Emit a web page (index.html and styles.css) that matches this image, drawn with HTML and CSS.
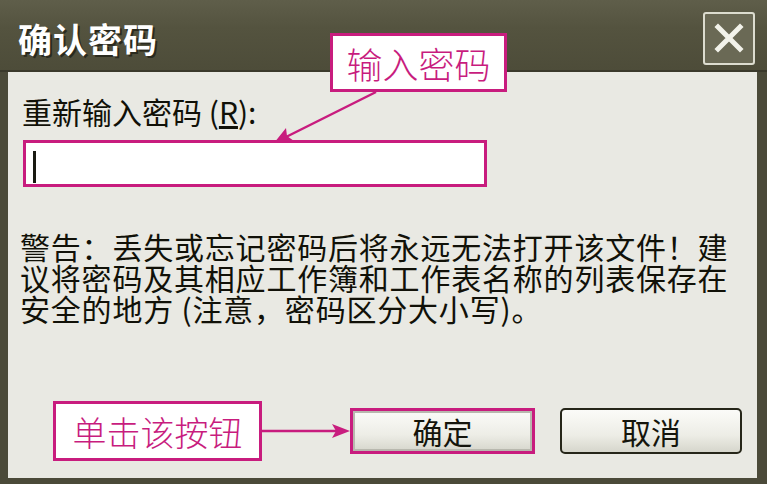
FILE: index.html
```html
<!DOCTYPE html>
<html lang="zh-CN">
<head>
<meta charset="utf-8">
<title>确认密码</title>
<link rel="stylesheet" href="styles.css">
</head>
<body>
<div class="window">
  <div class="titlebar">
    <span class="title">确认密码</span>
    <span class="close">
      <svg width="30" height="30" viewBox="0 0 30 30"><path d="M4 4 L26 26 M26 4 L4 26" stroke="#f2f2ea" stroke-width="5" stroke-linecap="square"/></svg>
    </span>
  </div>
  <div class="content">
    <div class="label">重新输入密码 (<u>R</u>):</div>
    <div class="input"><span class="caret"></span></div>
    <p class="warning">警告：丢失或忘记密码后将永远无法打开该文件！建<br>议将密码及其相应工作簿和工作表名称的列表保存在<br>安全的地方 (注意，密码区分大小写)。</p>
    <div class="buttons">
      <div class="callout callout-click">单击该按钮</div>
      <svg class="arrow-h" width="88" height="20" viewBox="0 0 88 20">
        <line x1="0" y1="10" x2="76" y2="10" stroke="#c81c7e" stroke-width="2.5"/>
        <path d="M88 10 L70 3 L74 10 L70 17 Z" fill="#c81c7e"/>
      </svg>
      <div class="btn btn-ok">确定</div>
      <div class="btn btn-cancel">取消</div>
    </div>
  </div>
  <div class="callout callout-input">输入密码</div>
  <svg class="arrow-d" width="110" height="56" viewBox="0 0 110 56">
    <line x1="104" y1="2" x2="14" y2="47" stroke="#c81c7e" stroke-width="2.5"/>
    <path d="M2 53 L14 38 L15 46 L22 51 Z" fill="#c81c7e"/>
  </svg>
</div>
</body>
</html>
```
FILE: styles.css
```css
html, body {
  margin: 0;
  padding: 0;
  background: #4a4938;
}
.window {
  position: relative;
  width: 767px;
  height: 484px;
  background: #4b4a39;
  display: flex;
  flex-direction: column;
  font-family: "Noto Sans CJK SC", "Noto Sans", sans-serif;
  overflow: hidden;
}
.titlebar {
  height: 72px;
  box-sizing: border-box;
  padding: 6px 12px 0 18px;
  display: flex;
  align-items: center;
  justify-content: space-between;
  background: linear-gradient(#5f5e4a, #54533f 40%, #4d4c39);
  border-bottom: 2px solid #3a392b;
}
.title {
  color: #ffffff;
  font-size: 34px;
  font-weight: 700;
  letter-spacing: 1px;
  text-shadow: 2px 2px 0 #2a2a1e;
}
.close {
  width: 52px;
  height: 53px;
  box-sizing: border-box;
  border: 2px solid #dcdccf;
  border-radius: 3px;
  background: #6a6955;
  display: flex;
  align-items: center;
  justify-content: center;
}
.content {
  flex: 1;
  margin: 0 10px 6px 8px;
  background: #e9e9e3;
  padding: 24px 0 0 0;
  display: flex;
  flex-direction: column;
}
.label {
  margin-left: 14px;
  font-size: 30px;
  line-height: 30px;
  color: #111108;
}
.label u {
  text-underline-offset: 2px;
}
.input {
  margin: 14px 0 0 15px;
  width: 464px;
  height: 47px;
  box-sizing: border-box;
  border: 3px solid #c81c7e;
  background: #ffffff;
  padding: 8px 0 0 7px;
}
.caret {
  display: block;
  width: 3px;
  height: 32px;
  background: #1a1a12;
}
.warning {
  margin: 44px 0 0 12px;
  font-size: 30px;
  line-height: 31px;
  letter-spacing: 0.8px;
  color: #111108;
}
.buttons {
  margin-top: auto;
  margin-bottom: 17px;
  margin-left: 45px;
  display: flex;
  align-items: center;
}
.callout {
  box-sizing: border-box;
  background: #ffffff;
  border: 3px solid #c81c7e;
  color: #c81c7e;
  font-weight: 300;
  display: flex;
  align-items: center;
  justify-content: center;
}
.callout-click {
  width: 209px;
  height: 60px;
  font-size: 34px;
}
.arrow-h {
  display: block;
}
.btn {
  box-sizing: border-box;
  height: 46px;
  display: flex;
  align-items: center;
  justify-content: center;
  font-size: 30px;
  color: #15150c;
  background: linear-gradient(#fbfbf8, #ededE6 60%, #d6d6cc);
}
.btn-ok {
  width: 185px;
  border: 3px solid #c81c7e;
  box-shadow: inset 0 0 0 2px #b8b8ae;
}
.btn-cancel {
  width: 182px;
  margin-left: 25px;
  border: 2px solid #262619;
  border-radius: 5px;
}
.callout-input {
  position: absolute;
  left: 330px;
  top: 33px;
  width: 177px;
  height: 59px;
  font-size: 36px;
}
.arrow-d {
  position: absolute;
  left: 272px;
  top: 90px;
}
```
